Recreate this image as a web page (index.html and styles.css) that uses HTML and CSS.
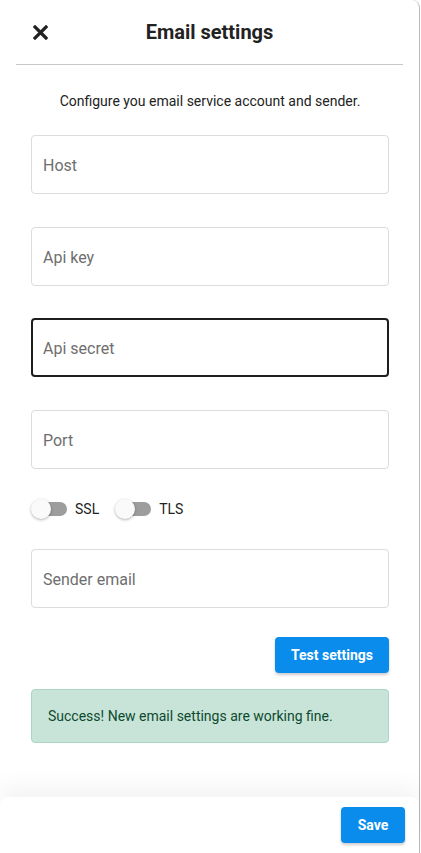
FILE: index.html
```html
<!DOCTYPE html>
<html lang="en">
<head>
<meta charset="utf-8">
<title>Email settings</title>
<link rel="stylesheet" href="styles.css">
</head>
<body>
<div class="panel">
  <header class="header">
    <button class="close" aria-label="Close">
      <svg width="15" height="15" viewBox="0 0 15 15"><path d="M2 2L13 13M13 2L2 13" stroke="#222" stroke-width="3.2" stroke-linecap="square"/></svg>
    </button>
    <h1 class="title">Email settings</h1>
  </header>
  <main class="content">
    <p class="intro">Configure you email service account and sender.</p>
    <div class="field"><span class="placeholder">Host</span></div>
    <div class="field"><span class="placeholder">Api key</span></div>
    <div class="field focused"><span class="placeholder">Api secret</span></div>
    <div class="field"><span class="placeholder">Port</span></div>
    <div class="toggles">
      <label class="toggle"><span class="switch"><span class="track"></span><span class="knob"></span></span><span class="tlabel">SSL</span></label>
      <label class="toggle"><span class="switch"><span class="track"></span><span class="knob"></span></span><span class="tlabel">TLS</span></label>
    </div>
    <div class="field"><span class="placeholder">Sender email</span></div>
    <div class="actions"><button class="btn">Test settings</button></div>
    <div class="alert">Success! New email settings are working fine.</div>
  </main>
  <footer class="footer"><button class="btn">Save</button></footer>
</div>
</body>
</html>
```
FILE: styles.css
```css
* { box-sizing: border-box; }
html, body { margin: 0; padding: 0; background: #fff; }
body { font-family: Roboto, "Noto Sans", "Liberation Sans", sans-serif; color: #222; }
.panel {
  width: 420px;
  height: 853px;
  display: flex;
  flex-direction: column;
  border-right: 1px solid #b8b8b8;
  border-top-right-radius: 8px;
  background: #fff;
}
.header {
  height: 65px;
  margin: 0 16px;
  border-bottom: 1px solid #c8c8c8;
  display: flex;
  align-items: center;
  justify-content: center;
  position: relative;
}
.close {
  position: absolute;
  left: 17px;
  top: 25px;
  background: none;
  border: 0;
  padding: 0;
  width: 15px;
  height: 15px;
  display: flex;
}
.title {
  margin: 0;
  font-size: 20px;
  font-weight: 700;
  color: #222;
  line-height: 24px;
}
.content {
  flex: 1;
  padding: 0 30px 0 31px;
  display: flex;
  flex-direction: column;
}
.intro {
  margin: 26px 0 24px;
  text-align: center;
  font-size: 14px;
  line-height: 20px;
  color: #222;
}
.field {
  height: 59px;
  border: 1px solid #dcdcdc;
  border-radius: 4px;
  display: flex;
  align-items: center;
  padding: 2px 0 0 11px;
  margin-bottom: 33px;
}
.field.focused { border: 2px solid #1e1e1e; padding-left: 10px; margin-top: -1px; margin-bottom: 33px; }
.placeholder { font-size: 16px; color: #6e6e6e; }
.toggles {
  display: flex;
  align-items: center;
  gap: 16px;
  margin: -3px 0 30px;
  height: 20px;
}
.toggle { display: flex; align-items: center; gap: 8px; }
.switch { position: relative; width: 36px; height: 20px; display: block; }
.track {
  position: absolute;
  left: 2px; top: 3px;
  width: 34px; height: 14px;
  border-radius: 7px;
  background: #9d9d9d;
}
.knob {
  position: absolute;
  left: 0; top: 0;
  width: 20px; height: 20px;
  border-radius: 50%;
  background: #fafafa;
  box-shadow: 0 1px 3px rgba(0,0,0,0.3);
}
.tlabel { font-size: 14px; color: #222; }
.actions { display: flex; justify-content: flex-end; margin-top: -4px; }
.btn {
  height: 36px;
  padding: 0 16px;
  border: 0;
  border-radius: 4px;
  background: #0a8ced;
  color: #fff;
  font-family: Roboto, "Noto Sans", "Liberation Sans", sans-serif;
  font-size: 14px;
  font-weight: 700;
  box-shadow: 0 2px 3px rgba(0,0,0,0.2);
}
.alert {
  margin-top: 16px;
  height: 54px;
  background: #c8e4d9;
  border: 1px solid #aad6c3;
  border-radius: 4px;
  color: #0d4a2d;
  font-size: 14px;
  display: flex;
  align-items: center;
  padding-left: 16px;
}
.footer {
  height: 56px;
  display: flex;
  justify-content: flex-end;
  align-items: flex-start;
  padding: 10px 14px 0 0;
  border-radius: 8px 8px 0 0;
  background: #fff;
  box-shadow: 0 -10px 24px rgba(0,0,0,0.05);
}
.footer .btn { width: 64px; padding: 0; }
```
